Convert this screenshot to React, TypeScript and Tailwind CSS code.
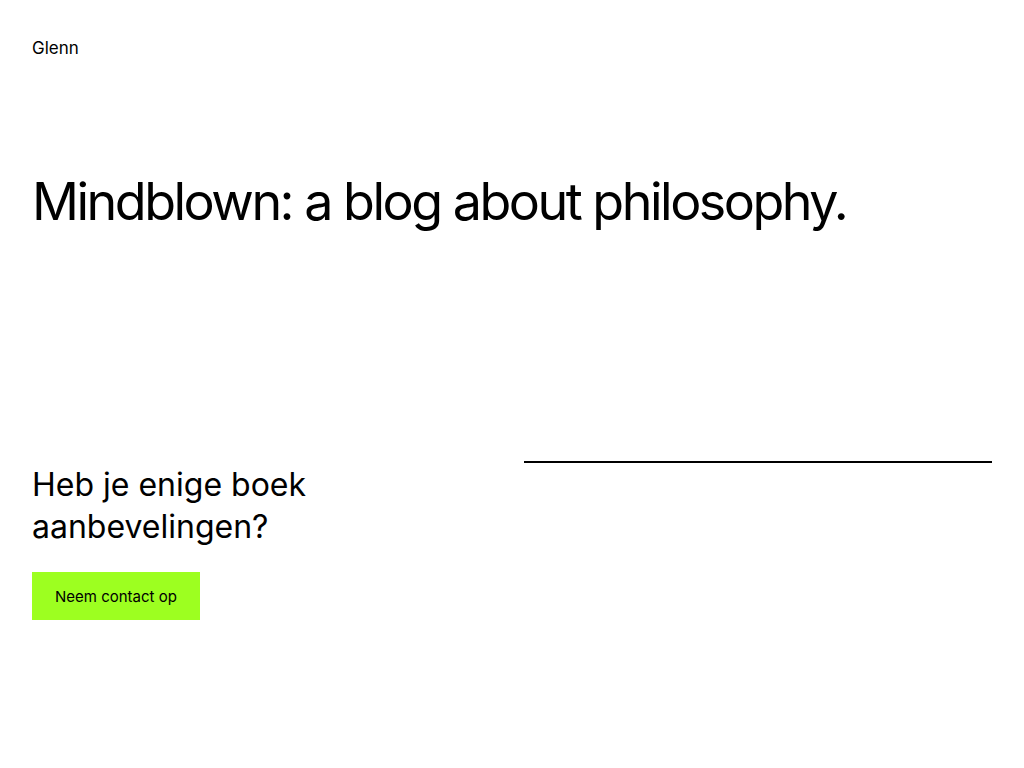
import React from "react";

const App = () => {
  return (
    <div className="min-h-screen w-full bg-white text-black px-8 font-['Inter',sans-serif]">
      <header className="pt-9">
        <p className="text-[17px] leading-6">Glenn</p>
      </header>
      <h1 className="mt-[111px] text-[52px] leading-[1.2] tracking-[-0.048em]">
        Mindblown: a blog about philosophy.
      </h1>
      <section className="mt-[228px] grid grid-cols-2 gap-6">
        <div className="flex flex-col items-start pt-[3px]">
          <h2 className="text-[32px] leading-[1.3] max-w-[300px]">
            Heb je enige boek aanbevelingen?
          </h2>
          <button className="mt-6 h-12 px-[23px] pt-1 bg-[#9dff20] text-[15px] text-black">
            Neem contact op
          </button>
        </div>
        <div>
          <div className="border-t-2 border-black" />
        </div>
      </section>
    </div>
  );
};

export default App;
